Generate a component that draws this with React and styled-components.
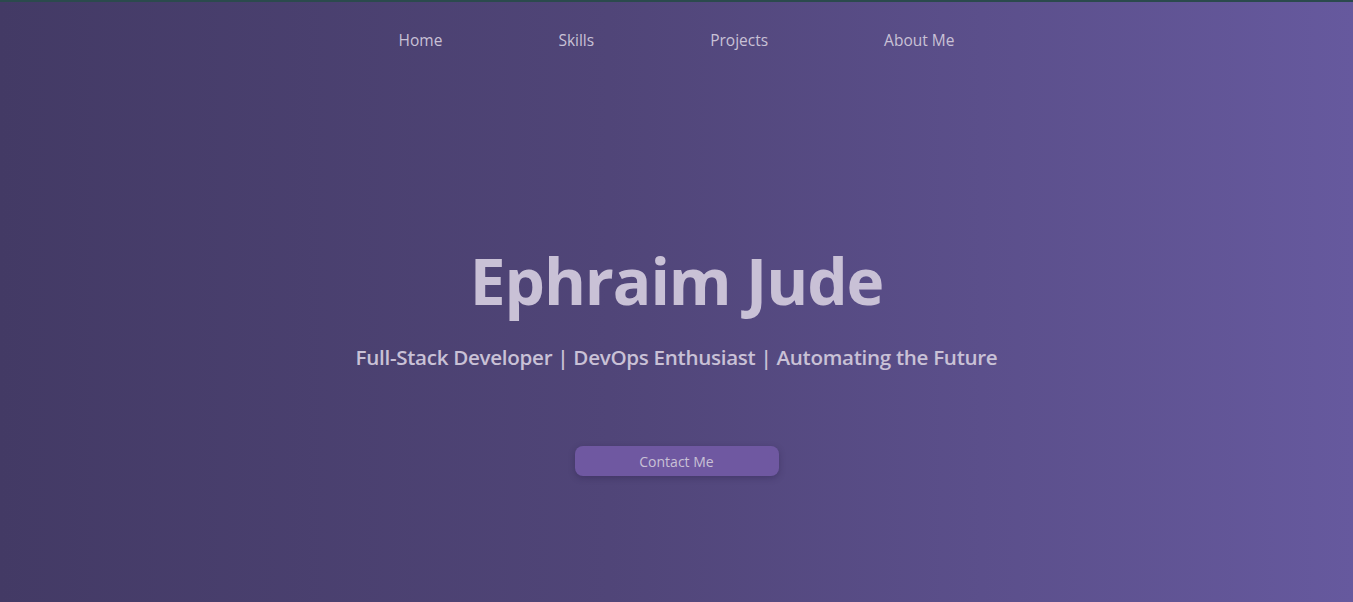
import React from 'react'
import styled, { createGlobalStyle } from 'styled-components'

const GlobalStyle = createGlobalStyle`
  html, body {
    margin: 0;
    padding: 0;
    height: 100%;
  }

  body {
    font-family: 'Open Sans', 'Noto Sans', sans-serif;
    background: #433a66;
  }
`

const Page = styled.div`
  min-height: 100vh;
  box-sizing: border-box;
  display: flex;
  flex-direction: column;
  border-top: 2px solid #2b4a4d;
  background: linear-gradient(90deg, #433a65 0%, #504578 45%, #66599e 100%);
  color: #c9c1d6;
`

const Nav = styled.nav`
  display: flex;
  justify-content: center;
  gap: 116px;
  padding-top: 28px;
  height: 24px;
`

const NavLink = styled.a`
  font-size: 15.5px;
  line-height: 20px;
  color: #c9c1d6;
  text-decoration: none;
  cursor: pointer;
`

const Hero = styled.section`
  display: flex;
  flex-direction: column;
  align-items: center;
  padding-top: 187px;
`

const Title = styled.h1`
  margin: 0;
  font-size: 64px;
  font-weight: 700;
  line-height: 80px;
  letter-spacing: -1.1px;
  color: #c9c1d6;
`

const Subtitle = styled.p`
  margin: 22px 0 0;
  font-size: 20.6px;
  font-weight: 600;
  line-height: 28px;
  letter-spacing: -0.3px;
  color: #c9c1d6;
`

const ContactButton = styled.button`
  margin-top: 75px;
  width: 204px;
  height: 30px;
  border: none;
  border-radius: 8px;
  background: #6f58a1;
  box-shadow: 0 2px 6px rgba(40, 30, 70, 0.35);
  font-family: inherit;
  font-size: 14px;
  color: #c9c1d6;
  cursor: pointer;
`

const links = ['Home', 'Skills', 'Projects', 'About Me']

const App = () => (
  <>
    <GlobalStyle />
    <Page>
      <Nav>
        {links.map((l) => (
          <NavLink key={l}>{l}</NavLink>
        ))}
      </Nav>
      <Hero>
        <Title>Ephraim Jude</Title>
        <Subtitle>Full-Stack Developer | DevOps Enthusiast | Automating the Future</Subtitle>
        <ContactButton>Contact Me</ContactButton>
      </Hero>
    </Page>
  </>
)

export default App
